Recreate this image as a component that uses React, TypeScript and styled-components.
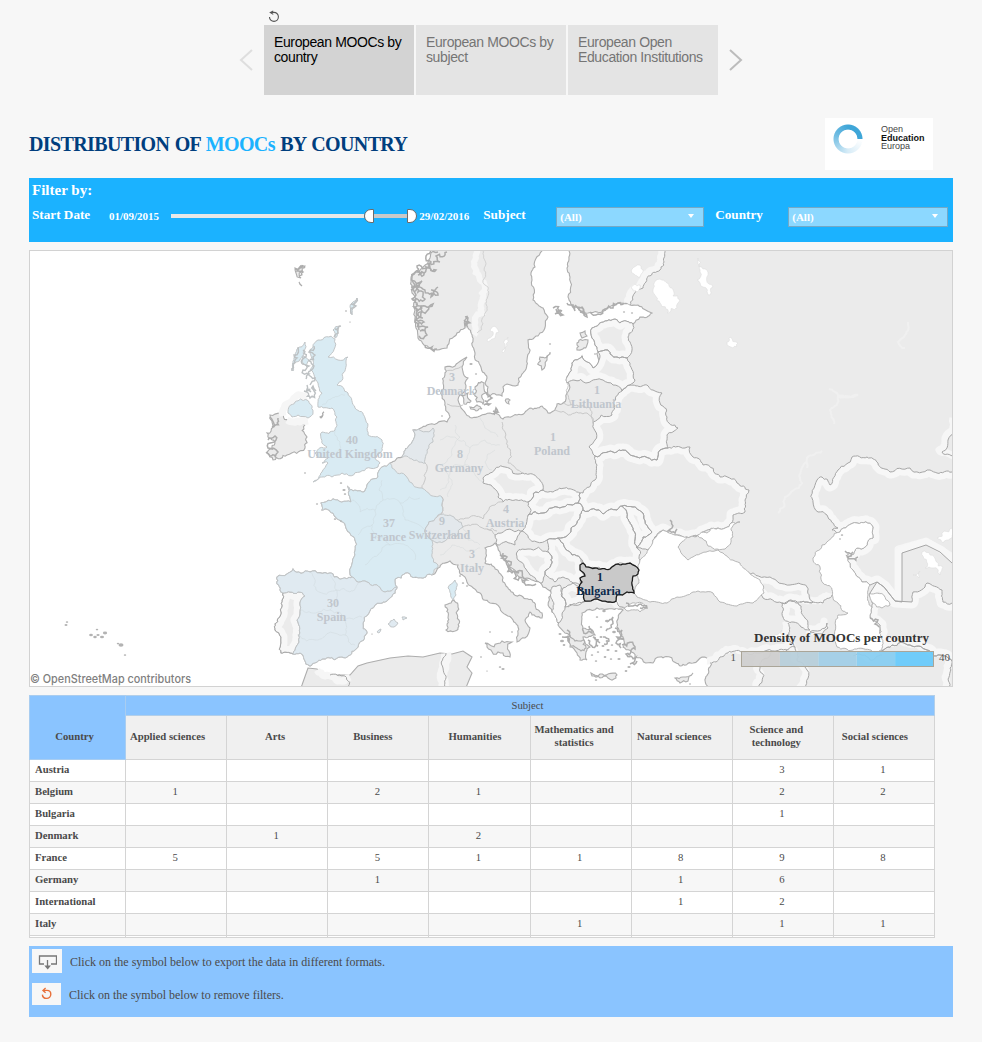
import React from "react";
import styled, { createGlobalStyle, css } from "styled-components";

const serif = '"Liberation Serif", "Times New Roman", serif';
const sans = '"Liberation Sans", Arial, sans-serif';

const GlobalStyle = createGlobalStyle`
  * { box-sizing: border-box; }
  body { margin: 0; background: #f7f7f7; font-family: ${serif}; }
`;

const Page = styled.main`
  width: 982px;
  height: 1042px;
  overflow: hidden;
  padding: 9px 29px 0;
  background: #f7f7f7;
`;

/* ---------- story navigation ---------- */

const StoryNav = styled.nav`
  width: 506px;
  height: 86px;
  margin-left: 209px;
`;
const ResetButton = styled.button`
  display: block;
  width: 14px;
  height: 16px;
  margin: 0 0 0 29px;
  padding: 0;
  border: 0;
  background: none;
`;
const StoryRow = styled.div`
  display: flex;
  align-items: center;
`;
const StoryPoints = styled.div`
  display: flex;
  gap: 2px;
`;
const StoryPoint = styled.div<{ $active?: boolean }>`
  width: 150px;
  height: 70px;
  padding: 10px 0 0 10px;
  font: 14px/15px ${sans};
  letter-spacing: -0.38px;
  white-space: pre-line;
  color: ${(p) => (p.$active ? "#000" : "#757575")};
  background: ${(p) => (p.$active ? "#d3d3d3" : "#e4e4e4")};
`;
const Arrow = styled.button<{ $faded?: boolean }>`
  width: 26px;
  height: 24px;
  padding: 0;
  border: 0;
  background: none;
  color: ${(p) => (p.$faded ? "#dedede" : "#bcbcbc")};
  svg { display: block; }
`;

/* ---------- heading ---------- */

const Heading = styled.header`
  display: flex;
  justify-content: space-between;
  height: 83px;
  padding: 23px 20px 0 0;
`;
const Title = styled.h1`
  margin: 14px 0 0;
  font: bold 20px/24px ${serif};
  letter-spacing: -0.62px;
  word-spacing: 0.9px;
  color: #003e7e;
  white-space: nowrap;
  span { color: #1bb2ff; }
`;
const LogoCard = styled.div`
  display: flex;
  width: 108px;
  height: 52px;
  padding: 5px 0 0 7px;
  background: #fff;
`;
const LogoRing = styled.div`
  width: 32px;
  height: 32px;
  border-radius: 50%;
  background: conic-gradient(#3fa6d8 0 90deg, #ffffff 92deg, #d7ecf7 180deg, #6fbce2 290deg, #3fa6d8 360deg);
  mask: radial-gradient(circle, transparent 9px, #000 9.8px, #000 14px, transparent 15px);
`;
const LogoText = styled.div`
  margin: 2px 0 0 17px;
  font: 9px/8.6px ${sans};
  color: #444;
  b { display: block; color: #111; }
`;

/* ---------- filters ---------- */

const FilterBar = styled.section`
  height: 64px;
  padding: 3px 0 0 3px;
  background: #1bb2ff;
  color: #fff;
  font-weight: bold;
`;
const FilterTitle = styled.div`
  font-size: 15px;
  line-height: 18px;
`;
const Filters = styled.div`
  display: flex;
  align-items: center;
  height: 34px;
`;
const FilterLabel = styled.label<{ $w: number; $indent?: number }>`
  width: ${(p) => p.$w}px;
  padding: 0 0 2px ${(p) => p.$indent ?? 0}px;
  font-size: 13.2px;
  line-height: 16px;
  white-space: nowrap;
`;
const DateValue = styled.span`
  font-size: 11px;
  line-height: 14px;
  white-space: nowrap;
`;
const Slider = styled.div`
  display: flex;
  align-items: center;
  width: 246px;
  margin: 0 2px 0 12px;
`;
const Track = styled.div<{ $w: number; $active?: boolean }>`
  width: ${(p) => p.$w}px;
  height: 4px;
  background: ${(p) => (p.$active ? "#c9c9c9" : "#e8e8e8")};
`;
const Handle = styled.div<{ $end?: boolean }>`
  width: 10px;
  height: 14px;
  border: 1px solid #6b6b6b;
  border-radius: ${(p) => (p.$end ? "0 7px 7px 0" : "7px 0 0 7px")};
  background: #fff;
`;
const Select = styled.div<{ $w: number }>`
  display: flex;
  align-items: center;
  justify-content: space-between;
  width: ${(p) => p.$w}px;
  height: 20px;
  margin-top: 2px;
  padding: 0 9px 0 3px;
  border: 1px solid #74a9c6;
  background: #8cd8ff;
  font-size: 11px;
`;
const Caret = styled.i`
  margin-bottom: 2px;
  border: 3.5px solid transparent;
  border-top: 4px solid #fff;
  border-bottom: 0;
`;

/* ---------- map ---------- */

const MapPanel = styled.section`
  height: 437px;
  margin-top: 8px;
  border: 1px solid #d2d2d2;
  background: #fff;
  svg { display: block; }
`;

type Pt = [number, number, boolean?];

/* "x,y" pairs; a pair that starts with "!" is reached by a straight line. */
const parse = (s: string): Pt[] =>
  s.trim().split(/\s+/).map((p) => {
    const [x, y] = p.replace("!", "").split(",").map(Number);
    return [x, y, p.startsWith("!")];
  });

const noise = (a: Pt, b: Pt) => {
  const v = Math.sin((a[0] + b[0]) * 12.9898 + (a[1] + b[1]) * 78.233) * 43758.5453;
  return (v - Math.floor(v)) * 2 - 1;
};

/* Midpoint displacement. The offset does not depend on the direction of the
   segment, so neighbours that share a frontier share its exact shape. */
const split = (a: Pt, b: Pt, k: number, out: Pt[]) => {
  const dx = b[0] - a[0];
  const dy = b[1] - a[1];
  if (Math.hypot(dx, dy) < 3) {
    out.push(b);
    return;
  }
  const s = dx > 0 || (dx === 0 && dy > 0) ? 1 : -1;
  const n = noise(a, b) * k * s;
  const m: Pt = [(a[0] + b[0]) / 2 - dy * n, (a[1] + b[1]) / 2 + dx * n];
  split(a, m, k, out);
  split(m, b, k, out);
};

const rough = (s: string, closed = false, k = 0.2) => {
  const pts = parse(s);
  const src = closed ? [...pts, pts[0]] : pts;
  const out: Pt[] = [src[0]];
  for (let i = 1; i < src.length; i++) {
    if (src[i][2]) out.push(src[i]);
    else split(src[i - 1], src[i], k, out);
  }
  return "M" + out.map((p) => `${p[0].toFixed(1)} ${p[1].toFixed(1)}`).join("L") + (closed ? "Z" : "");
};

const scandinavia =
  "438,248 430,258 423,267 413,275 412,293 415,310 416,328 418,338 424,345 430,348 437,350 447,348 457,333 465,328 467,317 468,328 473,340 475,353 480,365 487,378 485,383 488,387 488,397 502,396 503,387 507,384 518,385 523,373 527,360 528,340 540,333 548,317 543,308 533,300 532,280 535,267 543,248";

const mainland =
  "568,248 570,277 568,297 577,307 588,313 607,308 622,303 630,305 638,305 652,313 640,317 633,324 620,323 605,321 592,328 592,338 597,347 599,360 593,368 587,362 582,356 572,363 567,377 567,393 563,403 557,404 555,410 548,413 542,406 530,408 517,415 503,419 495,413 490,413 480,416 472,418 466,414 463,410 458,400 463,393 465,383 468,378 463,372 462,367 467,357 462,360 455,366 445,367 443,383 445,403 450,417 447,422 427,425 413,430 408,447 402,457 390,463 382,467 378,477 367,485 365,491 353,491 348,487 351,502 333,499 321,503 322,510 333,513 343,522 347,530 355,540 354,557 352,577 330,573 310,572 293,569 287,574 277,577 280,590 283,593 282,607 275,630 281,637 281,653 293,654 300,653 310,666 322,659 347,657 358,647 367,633 363,623 375,605 395,593 397,587 395,579 405,573 423,578 432,575 440,567 450,561 458,565 465,577 480,593 490,603 500,608 513,620 518,633 517,642 525,638 530,628 525,620 530,612 542,618 542,613 523,597 510,590 503,578 485,563 485,548 495,543 500,552 510,567 527,578 543,587 552,593 552,612 558,625 565,633 572,640 570,647 577,653 580,660 587,660 586,652 590,647 583,637 595,635 583,628 582,613 587,610 597,608 617,608 623,610 617,623 623,637 623,647 635,657 653,663 660,657 680,666 693,663 702,657 713,657 710,667 709,690 !700,800 !1200,800 !1200,50 !568,50";

const blackSea =
  "640,560 648,550 653,540 663,530 677,535 687,537 678,547 688,560 702,553 718,550 723,553 740,563 760,580 764,593 753,603 737,606 720,602 713,593 693,592 677,597 667,603 650,602 637,597 634,593 639,583";
const azov = "693,536 707,533 718,528 731,523 740,522 731,530 733,537 727,547 717,549 708,546 702,538";
const caspian =
  "840,532 857,523 873,527 873,538 865,547 857,548 847,557 853,570 862,582 870,585 868,595 872,607 870,618 880,625 882,650 853,650 837,647 833,637 838,615 848,613 838,603 823,583 820,567 813,558 822,545";

const waters = [
  "870,593 877,593 890,605 882,608 873,603",
  "622,607 632,603 646,606 640,612 628,611",
];
const paleLakes = [
  "662,280 672,288 680,300 677,308 667,313 660,303 653,290",
  "698,258 707,270 713,287 710,295 703,287 697,280 700,272",
  "730,337 738,343 733,348 727,342",
  "487,340 493,335 490,330 496,327 499,332 492,339 488,342",
  "502,352 508,337 507,346 503,353",
  "632,269 640,265 643,272 640,277 634,274",
  "631,288 640,285 637,292",
  "922,552 930,555 943,567 940,575 933,568 925,568",
  "937,538 944,531 952,528 956,533 943,543",
  "913,575 920,571 919,578",
  "770,640 782,630 784,638",
];

const islands = [
  "270,415 280,413 292,422 305,423 307,437 305,448 287,455 273,460 267,453 275,443 267,433 273,427",
  "445,605 451,603 454,600 458,605 459,620 455,631 446,630 448,618",
  "485,643 502,641 512,642 510,657 503,653 487,647",
  "591,673 600,674 617,675 616,678 600,678 592,676",
  "675,678 683,677 693,673 688,681 680,683",
  "540,357 550,352 547,360 542,370",
  "577,343 588,340 587,345 577,350",
  "580,333 585,331 587,336 582,338",
  "475,387 484,383 487,393 483,404 477,402 474,394",
  "461,395 468,393 471,401 464,404",
  "470,407 477,405 482,409 476,411",
  "506,399 510,400 509,404 506,402",
  "320,417 324,412 323,415 321,418",
  "295,268 305,266 301,272 301,278 296,273",
  "299,282 302,286 301,285",
  "568,636 578,641 584,640 586,648 581,651 575,647",
];

const bluePlaces = [
  "318,340 335,339 328,357 348,357 343,373 337,385 348,393 355,408 365,418 368,435 382,440 380,453 375,458 380,463 378,467 360,472 342,473 332,477 320,477 313,482 322,472 328,463 322,463 328,458 315,453 327,447 322,432 335,430 337,417 332,408 318,407 322,393 318,383 310,370 313,360 310,353 313,347",
  "288,413 295,402 307,400 313,412 308,418 298,415 292,417",
  "297,349 305,342 304,351 296,362 293,371 294,358",
  "352,303 357,298 354,306 352,315 350,307",
  "333,330 340,326 338,333 335,338",
  "302,356 309,360 307,367 302,361",
  "390,463 392,468 405,475 412,483 422,488 442,497 437,517 425,530 432,540 432,557 438,565 432,575 423,578 405,573 395,579 397,587 367,582 352,577 354,557 355,540 347,530 343,522 333,513 322,510 321,503 333,499 351,502 348,487 353,491 365,491 367,485 378,477 382,467",
  "448,588 455,580 456,595 453,600",
];
const paleBluePlaces = [
  "283,593 280,590 277,577 287,574 293,569 310,572 330,573 352,577 367,582 397,587 395,593 375,605 363,623 367,633 358,647 347,657 322,659 310,666 300,653 293,654 297,620 300,603 305,596 290,592",
  "388,624 394,619 398,623 394,627",
  "402,617 407,618 403,620",
  "377,632 381,629 379,633",
];
const greyBluePlaces = [
  "413,430 433,428 433,442 427,450 425,463 413,460 402,457 408,447",
  "437,517 450,515 457,520 463,527 457,536 450,535 443,542 432,540 425,530",
];

const framed = [
  "622,391 630,385 642,386 653,390 662,393 660,403 667,417 678,428 667,435 668,448 660,450 657,460 637,457 613,452 595,456 589,447 595,440 593,422 612,415 613,403",
  "595,456 613,452 637,457 657,460 660,450 668,448 680,447 690,447 693,457 703,465 720,477 737,483 749,490 745,500 745,512 733,515 731,523 718,528 693,536 687,537 677,535 663,530 653,540 648,550 637,548 643,537 652,532 643,513 633,507 622,506 617,510 603,514 583,510 578,503 580,493 583,493 595,480 597,465",
  "583,510 603,514 617,510 622,506 627,518 633,530 637,548 640,560 639,570 630,563 618,564 610,569 595,568 586,567 580,558 572,555 565,548 558,538 568,535 577,523",
  "622,506 633,507 643,513 652,532 643,537 637,548 633,530 627,518",
  "528,515 543,513 557,507 578,503 583,510 577,523 568,535 558,538 547,540 537,542 522,531 527,520",
  "528,502 543,490 553,492 580,493 578,503 557,507 543,513 528,515",
  "483,478 490,473 505,467 523,473 543,485 543,490 528,502 503,502 498,497 483,483",
  "495,535 522,531 517,538 515,545 497,545",
  "517,552 528,549 548,552 552,563 545,573 542,583 530,575 518,560",
  "547,540 558,538 565,548 572,555 580,558 582,565 585,576 580,578 582,585 573,583 563,577 555,582 545,573 552,563 548,552",
  "563,588 573,583 580,587 584,593 585,601 565,607 562,597",
  "552,587 560,585 562,597 565,607 558,623 552,612",
  "283,593 290,592 305,596 300,603 297,620 293,654 281,653 281,637 275,630 282,607",
  "592,328 605,321 620,323 633,324 628,337 632,350 627,358 617,357 608,350 598,352 597,347 592,338",
  "598,352 608,350 617,357 627,358 630,363 635,380 630,385 622,391 613,385 603,380 573,380 567,383 567,377 572,363 582,356 587,362 593,368 599,360",
  "748,573 770,577 790,585 807,587 813,602 800,602 782,603 763,598",
  "782,603 798,603 805,618 810,630 793,622 783,617",
  "1200,472 !958,472 !952,472 937,473 930,470 910,468 890,472 878,463 867,457 852,457 838,470 830,485 822,477 817,480 813,502 818,512 827,515 838,528 832,530 837,533 840,532 857,523 873,527 873,538 865,547 857,548 847,557 853,570 862,582 870,585 !877,582 !884,587 !895,601 !902,602 !902,553 !926,545 !940,552 !952,563 !1200,700 !1200,472",
  "1200,603 !958,603 !952,603 943,602 942,590 927,583 913,592 912,602 !895,601 !884,587 !877,582 !870,593 872,607 870,618 880,625 882,651 892,645 910,645 927,650 940,655 952,661 !1200,800 !1200,603",
];

const frontiers = [
  "630,305 643,288 660,270 667,248",
  "813,602 823,603 832,595",
  "800,602 813,602",
  "788,623 795,647 807,670 802,690",
  "810,632 827,623 828,628 822,634 810,632",
  "710,663 720,657 747,653 787,650 795,647",
  "787,650 762,660 758,690",
  "882,651 892,645 910,645 927,650 940,655 952,661 950,690",
  "853,656 870,660 882,655",
  "956,420 948,440 942,452 956,458",
  "568,607 584,602 597,599 608,602 616,601 622,607",
];
const innerFrontiers = [
  "502,422 505,437 508,463 523,473",
  "447,404 455,406 463,405",
  "555,410 587,413 593,422",
  "563,403 577,405 590,408 593,422",
  "503,502 495,505 487,512 483,519 470,517 457,520",
  "463,527 478,525 487,529 497,531",
  "487,529 495,535",
  "442,497 437,517",
  "425,463 425,480 422,488",
  "445,371 455,369 462,366",
  "567,383 567,393 571,405",
];
const regions = [
  "440,440 455,437 470,448 485,440 500,445",
  "455,425 460,437 452,455 440,465",
  "470,448 465,465 478,478 483,483",
  "440,465 452,480 448,497",
  "480,418 488,430 498,437",
  "465,465 450,470 440,490",
  "382,480 383,500 400,503 420,498",
  "352,500 360,512 375,510 383,500",
  "375,510 372,525 358,535",
  "400,503 405,520 425,530",
  "372,525 390,545 405,545 415,560",
  "390,545 378,555 365,565",
  "330,575 336,590 350,592 358,583",
  "310,572 316,590 337,590 330,610 345,620 362,617",
  "300,610 318,612 330,610",
  "297,635 318,640 345,635 355,645",
  "345,620 345,635",
  "335,430 340,442 336,455",
  "322,405 345,395",
  "495,450 485,462 492,470",
  "462,527 468,540 480,545",
  "440,555 452,545 465,550 480,548",
];

const bulgaria =
  "580,565 583,563 586,567 595,568 610,569 618,564 630,563 639,570 638,574 633,576 632,585 634,593 627,592 617,595 616,601 608,602 597,599 585,601 584,593 579,587 582,582 580,578 585,576 580,570";

const fjords = [
  "438,252 426,256 431,262 417,266 424,273 412,277 419,283 411,287",
  "447,252 436,256 440,262 428,264 436,270 418,275",
  "414,292 428,293 434,291 438,295 431,297 438,287",
  "413,287 422,281 418,292 425,299 413,300",
  "414,308 425,306 433,304 427,311 418,313 423,318",
  "416,304 422,311 416,320 424,322 417,327",
  "417,326 428,327 420,331 427,335 419,336",
  "412,280 415,285 411,290 416,295 412,299 417,303 414,307 418,315 415,322 419,330",
  "425,345 432,347 431,349 437,349",
  "465,317 468,318 466,326 464,320",
  "553,308 562,311 555,314 563,315 556,309",
  "567,303 575,311 572,306 584,312 577,308 587,317 580,312",
  "590,312 598,314 605,309 613,308 618,303 624,303",
  "295,269 303,267 297,271 303,272 299,276",
  "268,440 275,436 268,448 278,452 270,456 266,452",
  "270,417 272,427 278,418",
  "500,555 507,557 504,560 511,565 508,567 519,573 515,572 527,580 522,580 536,584",
  "503,553 506,561 512,571 522,578",
  "562,637 569,642 567,630",
  "583,628 592,633 589,626",
  "607,622 613,617 611,625 606,631",
  "603,637 609,641 604,644",
  "615,628 622,630 617,637 624,639 616,643 621,648",
  "622,645 635,649 626,654 636,657 630,664 637,661",
  "588,640 598,646 593,637 600,643",
  "626,603 633,606 641,604 647,608 640,608",
  "870,618 878,620 875,624 879,627",
  "670,520 672,528 668,531 675,533 677,529",
  "845,551 853,552 847,556 858,557",
  "486,393 492,398 485,401 490,404 484,405",
  "493,411 498,412 496,408 494,415",
];
const skerries = [
  "303,350 306,357 302,360 309,366 303,370 309,374 306,379",
  "307,385 311,392 304,391 310,398 313,386 316,391",
  "314,346 309,352 315,355 309,361 314,366 308,374 315,378 310,385",
  "298,347 294,355 297,358 292,371",
  "357,298 351,304 356,306 351,314",
  "341,326 335,329 338,333 334,337",
];

const specks: [number, number, number][] = [
  [67, 622, 1], [66, 625, 1.2], [97, 629.5, 1], [105, 633, 1.7], [102, 637, 1.6], [98, 635, 1.3], [95, 637, 1.4], [91, 635, 1.5],
  [118, 643.5, 1], [121, 645, 2], [125, 655, 1],
  [346, 311, 0.8], [350, 322, 0.7], [305, 473, 0.8], [341, 483, 1], [344, 490, 1.3], [345, 494, 1], [317, 504, 0.9], [335, 519, 1], [341, 521, 0.8],
  [471, 364, 1.3], [476, 374, 0.9], [442, 416, 0.8], [550, 344, 0.9], [595, 354, 0.8], [624, 312, 0.9], [632, 313, 0.9],
  [372, 634, 0.7], [481, 657, 0.8], [487, 671, 0.7], [500, 667, 1], [503, 669, 1.3], [460, 576, 0.9], [463, 583, 1], [467, 586, 0.9],
  [604, 611, 1.4], [597, 617, 1], [607, 621, 1.6], [614, 632, 1.5], [601, 637, 1.2], [607, 641, 1.1], [603, 646, 1.2], [608, 650, 1.3],
  [598, 652, 1], [612, 645, 1], [616, 651, 1.2], [605, 657, 1.1], [596, 661, 1], [619, 659, 1.3], [629, 667, 1.3], [626, 671, 1.1],
  [592, 655, 1], [601, 627, 1], [611, 659, 1], [596, 680, 1], [560, 634, 1.2], [562, 641, 1.6], [564, 645, 1.1], [490, 632, 0.8], [512, 632, 0.8],
  [842, 535, 1], [848, 554, 1], [840, 539, 0.8], [690, 684, 0.8],
];

const mapLabels: [string, string, number, number, number][] = [
  ["3", "Denmark", 452, 451, 381],
  ["1", "Lithuania", 597, 596, 394],
  ["1", "Poland", 553, 552, 441],
  ["40", "United Kingdom", 352, 350, 444],
  ["8", "Germany", 460, 459, 458],
  ["4", "Austria", 506, 505, 513],
  ["37", "France", 389, 388, 527],
  ["9", "Switzerland", 442, 439.5, 525],
  ["3", "Italy", 472, 472, 558],
  ["30", "Spain", 333, 331.5, 607],
];

const legend = ["#cfcfcf", "#b8cfdb", "#a2cfe7", "#88cef2", "#69cbfb"];

const MapLabel = styled.text<{ $strong?: boolean }>`
  font: bold 12px ${serif};
  text-anchor: middle;
  fill: ${(p) => (p.$strong ? "#0c2a4c" : "#c0c6cd")};
`;
const LegendTitle = styled.text`
  font: bold 13px ${serif};
  fill: #333;
`;
const LegendValue = styled.text`
  font: 11px ${serif};
  fill: #555;
`;
const Attribution = styled.text`
  font: 500 11.5px Inter, sans-serif;
  fill: #808080;
`;

function EuropeMap() {
  return (
    <svg width="922" height="435" viewBox="30 251 922 435" role="img" aria-label="Map of MOOCs per country">
      <defs>
        {framed.map((p, i) => (
          <clipPath id={`frame${i}`} key={i}>
            <path d={rough(p, true)} />
          </clipPath>
        ))}
      </defs>
      <g fill="#ebebeb" stroke="#adadad" strokeWidth="1.1">
        <path d={rough(scandinavia)} />
        <path d={rough(mainland, true)} />
        <path d="M300 690L302 685L308 668L317 669L325 675L350 675L358 666L367 663L390 658L408 656L423 657L440 653L452 654L463 651L472 657L467 667L472 673L465 690Z" />
        {islands.map((p) => (
          <path key={p} d={rough(p, true, 0.3)} />
        ))}
      </g>
      <path d={rough("479,248 480,280 485,287 483,300 482,313 475,318 474,335")} fill="none" stroke="#f6f6f6" strokeWidth="6" />
      <path d={rough("481,248 483,280 488,287 486,300 485,313 477,333")} fill="none" stroke="#cbcbcb" strokeWidth=".8" />
      <g fill="none" stroke="#f6f6f6" strokeWidth="7" strokeLinejoin="round">
        {frontiers.map((p) => (
          <path key={p} d={rough(p)} transform="translate(-3 -2)" />
        ))}
        <path d={rough("283,416 285,405 294,398 307,396")} />
        <path d={rough("287,420 300,422 308,421")} />
        <path d={rough("317,670 325,676 350,677")} />
        <path d={rough("446,653 444,665 445,690")} strokeWidth="10" />
        <path d="M898 598V549L926 541L956 559" />
      </g>
      <g fill="none" stroke="#f7f7f7" strokeWidth="13" strokeLinejoin="round">
        {framed.map((p, i) => (
          <path key={i} d={rough(p, true)} clipPath={`url(#frame${i})`} />
        ))}
      </g>
      <g fill="none" stroke="#a6a6a6" strokeWidth="1">
        {framed.map((p, i) => (
          <path key={i} d={rough(p, true)} />
        ))}
        {frontiers.map((p) => (
          <path key={p} d={rough(p)} />
        ))}
        <path d={rough("446,653 443,668 446,676 444,690")} />
        <path d={rough("330,675 345,676 349,690")} />
      </g>
      <g stroke="#c2c6c8" strokeWidth="1">
        <g fill="#d9ebf3">{bluePlaces.map((p) => <path key={p} d={rough(p, true)} />)}</g>
        <g fill="#e0eaf1">{paleBluePlaces.map((p) => <path key={p} d={rough(p, true)} />)}</g>
        <g fill="#e3e8ec">{greyBluePlaces.map((p) => <path key={p} d={rough(p, true)} />)}</g>
      </g>
      <g fill="none" stroke="#c8c8c8" strokeWidth="1">
        {innerFrontiers.map((p) => <path key={p} d={rough(p)} />)}
      </g>
      <g fill="none" stroke="#c3cacd" strokeWidth=".5" opacity=".55">
        {regions.map((p) => <path key={p} d={rough(p)} />)}
      </g>
      <g fill="#fff" stroke="#b0b0b0" strokeWidth=".9">
        <path d={rough(blackSea, true, 0.12)} />
        <path d={rough(azov, true)} />
        <path d={rough(caspian, true)} />
        {waters.map((p) => <path key={p} d={rough(p, true)} />)}
      </g>
      <g fill="#fff" stroke="#dedede" strokeWidth=".6">
        {paleLakes.map((p) => <path key={p} d={rough(p, true, 0.3)} />)}
      </g>
      <g fill="none" stroke="#f0f0f0" strokeWidth="2">
        <path d={rough("829,389 838,396 858,395 838,397 830,410 834,424")} />
        <path d={rough("908,322 905,335 898,342 905,348")} />
        <path d={rough("807,468 807,458 822,451")} />
        <path d={rough("806,462 802,483 785,497 778,513")} />
      </g>
      <g fill="none" stroke="#adadad" strokeWidth="1.5">
        {fjords.map((p) => <path key={p} d={rough(p, false, 0.4)} />)}
      </g>
      <g fill="none" stroke="#bdc1c3" strokeWidth="1.4">
        {skerries.map((p) => <path key={p} d={rough(p, false, 0.4)} />)}
      </g>
      <g fill="#b3b3b3">
        {specks.map(([x, y, r]) => <ellipse key={`${x}-${y}`} cx={x} cy={y} rx={r * 1.25} ry={r * 0.85} />)}
      </g>
      <path d={rough(bulgaria, true, 0.15)} fill="#c9c9c9" stroke="#1c1c1c" strokeWidth="1.3" />
      {mapLabels.map(([n, name, x1, x2, y]) => (
        <g key={name}>
          <MapLabel x={x1} y={y}>{n}</MapLabel>
          <MapLabel x={x2} y={y + 14}>{name}</MapLabel>
        </g>
      ))}
      <MapLabel $strong x="600" y="581">1</MapLabel>
      <MapLabel $strong x="598.5" y="595">Bulgaria</MapLabel>
      <LegendTitle x="754" y="642" textLength="175">Density of MOOCs per country</LegendTitle>
      <LegendValue x="730.5" y="661">1</LegendValue>
      <g opacity=".94">
        {legend.map((c, i) => <rect key={c} x={741.5 + i * 38.4} y="651.5" width="38.4" height="15" fill={c} />)}
      </g>
      <rect x="741.5" y="651.5" width="192" height="15" fill="none" stroke="#aaa598" />
      <LegendValue x="939" y="661">40</LegendValue>
      <Attribution x="30" y="683" textLength="161" lengthAdjust="spacingAndGlyphs">© OpenStreetMap contributors</Attribution>
    </svg>
  );
}

/* ---------- table ---------- */

const TableFrame = styled.section`
  width: 906px;
  height: 243px;
  margin-top: 8px;
  overflow: hidden;
  border-bottom: 1px solid #d4d4d4;
`;
const Table = styled.table`
  width: 906px;
  table-layout: fixed;
  border-collapse: collapse;
  font-size: 10.7px;
  line-height: 13px;
  color: #4a4a4a;
`;
const cell = css`
  padding: 0;
  border: 1px solid #d4d4d4;
`;
const CountryHead = styled.th`
  ${cell}
  width: 96px;
  padding: 18px 6px 0 0;
  background: #8ac4ff;
  border-color: #a9cdf0;
`;
const SubjectHead = styled.th`
  ${cell}
  height: 20px;
  font-weight: normal;
  padding: 0 5px 1px 0;
  background: #8ac4ff;
  border-color: #b3cfe9;
`;
const ColumnHead = styled.th<{ $shift: number }>`
  ${cell}
  height: 44px;
  padding: 0 ${(p) => p.$shift}px 3px 0;
  white-space: pre-line;
  background: #f0f0f0;
`;
const Row = styled.tr`
  height: 22px;
  background: #fff;
  &:nth-child(even) { background: #f7f7f7; }
`;
const RowHead = styled.th`
  ${cell}
  padding: 0 0 2px 5px;
  text-align: left;
`;
const Value = styled.td`
  ${cell}
  padding: 0 2px 2px 0;
  text-align: center;
`;

const columns: [string, number][] = [
  ["Applied sciences", 17],
  ["Arts", 4],
  ["Business", 11],
  ["Humanities", 9],
  ["Mathematics and\nstatistics", 13],
  ["Natural sciences", 15],
  ["Science and\ntechnology", 13],
  ["Social sciences", 18],
];
const rows: [string, string[]][] = [
  ["Austria", ["", "", "", "", "", "", "3", "1"]],
  ["Belgium", ["1", "", "2", "1", "", "", "2", "2"]],
  ["Bulgaria", ["", "", "", "", "", "", "1", ""]],
  ["Denmark", ["", "1", "", "2", "", "", "", ""]],
  ["France", ["5", "", "5", "1", "1", "8", "9", "8"]],
  ["Germany", ["", "", "1", "", "", "1", "6", ""]],
  ["International", ["", "", "", "", "", "1", "2", ""]],
  ["Italy", ["", "", "", "", "1", "", "1", "1"]],
  ["", ["", "", "", "", "", "", "", ""]],
];

/* ---------- footer ---------- */

const Footer = styled.footer`
  display: flex;
  flex-direction: column;
  gap: 10px;
  height: 71px;
  margin-top: 8px;
  padding: 3px;
  background: #8ac4ff;
`;
const Action = styled.div<{ $small?: boolean }>`
  display: flex;
  align-items: center;
  gap: 8px;
  height: ${(p) => (p.$small ? 22 : 24)}px;
  font-size: 12px;
  color: #4a4a4a;
  span { padding-top: 2px; }
`;
const IconBox = styled.button<{ $w: number }>`
  display: grid;
  place-items: center;
  width: ${(p) => p.$w}px;
  height: 100%;
  padding: 0;
  border: 0;
  background: #f7f7f7;
`;

export default function App() {
  return (
    <Page>
      <GlobalStyle />
      <StoryNav>
        <ResetButton aria-label="Reset">
          <svg width="14" height="16" viewBox="0 0 14 16" fill="none" stroke="#555" strokeWidth="1.1">
            <path d="M6.5 3.4C9.2 3.2 11.4 5 11.4 7.8C11.4 10.4 9.4 12.4 7 12.4C4.4 12.4 2.5 10.4 2.5 7.9" />
            <path d="M3.2 3.5H7M6.3 2L3.3 3.5L6.3 5.4" />
          </svg>
        </ResetButton>
        <StoryRow>
          <Arrow $faded aria-label="Previous">
            <svg width="26" height="24" fill="none" stroke="currentColor" strokeWidth="2">
              <path d="M14 2L3 12L14 22" />
            </svg>
          </Arrow>
          <StoryPoints>
            <StoryPoint $active>{"European MOOCs by\ncountry"}</StoryPoint>
            <StoryPoint>{"European MOOCs by\nsubject"}</StoryPoint>
            <StoryPoint>{"European Open\nEducation Institutions"}</StoryPoint>
          </StoryPoints>
          <Arrow aria-label="Next">
            <svg width="26" height="24" fill="none" stroke="currentColor" strokeWidth="2">
              <path d="M12 2L23 12L12 22" />
            </svg>
          </Arrow>
        </StoryRow>
      </StoryNav>

      <Heading>
        <Title>DISTRIBUTION OF <span>MOOCs</span> BY COUNTRY</Title>
        <LogoCard>
          <LogoRing />
          <LogoText>Open<b>Education</b>Europa</LogoText>
        </LogoCard>
      </Heading>

      <FilterBar>
        <FilterTitle>Filter by:</FilterTitle>
        <Filters>
          <FilterLabel $w={77}>Start Date</FilterLabel>
          <DateValue>01/09/2015</DateValue>
          <Slider>
            <Track $w={193} />
            <Handle />
            <Track $w={33} $active />
            <Handle $end />
          </Slider>
          <DateValue>29/02/2016</DateValue>
          <FilterLabel $w={87} $indent={14}>Subject</FilterLabel>
          <Select $w={148}>(All)<Caret /></Select>
          <FilterLabel $w={84} $indent={11}>Country</FilterLabel>
          <Select $w={160}>(All)<Caret /></Select>
        </Filters>
      </FilterBar>

      <MapPanel>
        <EuropeMap />
      </MapPanel>

      <TableFrame>
        <Table>
          <thead>
            <tr>
              <CountryHead rowSpan={2}>Country</CountryHead>
              <SubjectHead colSpan={8}>Subject</SubjectHead>
            </tr>
            <tr>
              {columns.map(([name, shift]) => (
                <ColumnHead key={name} $shift={shift}>{name}</ColumnHead>
              ))}
            </tr>
          </thead>
          <tbody>
            {rows.map(([name, values]) => (
              <Row key={name}>
                <RowHead>{name}</RowHead>
                {values.map((v, i) => <Value key={i}>{v}</Value>)}
              </Row>
            ))}
          </tbody>
        </Table>
      </TableFrame>

      <Footer>
        <Action>
          <IconBox $w={30} aria-label="Export">
            <svg width="20" height="18" viewBox="0 0 20 18" fill="none" stroke="#777" strokeWidth="1.3">
              <path d="M7 12H2.5V4H19.5V12H14" />
              <path d="M10.5 8V14" />
              <path d="M7.3 13.5H14L10.7 17.5Z" fill="#777" stroke="none" />
            </svg>
          </IconBox>
          <span>Click on the symbol below to export the data in different formats.</span>
        </Action>
        <Action $small>
          <IconBox $w={29} aria-label="Remove filters">
            <svg width="13" height="14" viewBox="0 0 13 14" fill="none" stroke="#e8703a" strokeWidth="1.4">
              <path d="M4 3.4H7C9.3 3.4 10.8 5.2 10.8 7.3C10.8 9.6 9 11.4 6.6 11.4C4.3 11.4 2.5 9.8 2.4 7.6" />
              <path d="M5.6 1L3 3.4L5.6 5.8" />
            </svg>
          </IconBox>
          <span>Click on the symbol below to remove filters.</span>
        </Action>
      </Footer>
    </Page>
  );
}
